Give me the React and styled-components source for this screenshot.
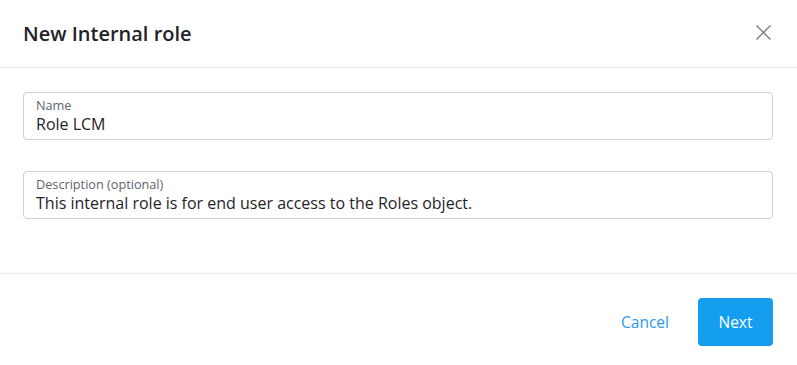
import React from "react";
import styled, { createGlobalStyle } from "styled-components";

const GlobalStyle = createGlobalStyle`
  html, body {
    margin: 0;
    padding: 0;
    background: #ffffff;
  }
  body {
    font-family: "Open Sans", "Liberation Sans", sans-serif;
    color: #1f2329;
  }
`;

export default function App() {
  return (
    <>
      <GlobalStyle />
      <Dialog>
        <Header>
          <Title>New Internal role</Title>
          <CloseButton aria-label="Close">
            <svg width="15" height="15" viewBox="0 0 15 15">
              <path
                d="M0.5 0.5 L14.5 14.5 M14.5 0.5 L0.5 14.5"
                stroke="#7b7f85"
                strokeWidth="1.4"
                fill="none"
              />
            </svg>
          </CloseButton>
        </Header>
        <Body>
          <Field>
            <Label>Name</Label>
            <Value>Role LCM</Value>
          </Field>
          <Field>
            <Label>Description (optional)</Label>
            <Value>This internal role is for end user access to the Roles object.</Value>
          </Field>
        </Body>
        <Footer>
          <LinkButton>Cancel</LinkButton>
          <PrimaryButton>Next</PrimaryButton>
        </Footer>
      </Dialog>
    </>
  );
}

const Dialog = styled.div`
  width: 797px;
  height: 365px;
  display: flex;
  flex-direction: column;
  background: #fff;
`;

const Header = styled.header`
  height: 68px;
  display: flex;
  align-items: center;
  justify-content: space-between;
  padding: 0 26px 0 23px;
  border-bottom: 1px solid #e8eaed;
  box-sizing: border-box;
`;

const Title = styled.h1`
  margin: 0;
  font-size: 20px;
  font-weight: 600;
  color: #1f2329;
  line-height: 1;
`;

const CloseButton = styled.button`
  border: 0;
  background: none;
  padding: 0;
  display: flex;
  cursor: pointer;
  margin-top: -3px;
`;

const Body = styled.div`
  display: flex;
  flex-direction: column;
  gap: 31px;
  padding: 24px 24px 0 23px;
  height: 206px;
  box-sizing: border-box;
  border-bottom: 1px solid #e8eaed;
`;

const Field = styled.div`
  height: 48px;
  box-sizing: border-box;
  border: 1px solid #c9d0da;
  border-radius: 4px;
  padding: 4px 12px 0;
  display: flex;
  flex-direction: column;
`;

const Label = styled.span`
  font-size: 12.7px;
  line-height: 17px;
  color: #5d6570;
`;

const Value = styled.span`
  font-size: 16px;
  line-height: 20px;
  color: #1f2329;
`;

const Footer = styled.footer`
  display: flex;
  justify-content: flex-end;
  align-items: flex-start;
  gap: 29px;
  padding: 24px 24px 0 23px;
`;

const LinkButton = styled.button`
  border: 0;
  background: none;
  font-family: inherit;
  font-size: 15.5px;
  color: #2a9aea;
  height: 48px;
  padding: 0;
  cursor: pointer;
`;

const PrimaryButton = styled.button`
  width: 75px;
  height: 48px;
  border: 0;
  border-radius: 4px;
  background: #139ef0;
  color: #fff;
  font-family: inherit;
  font-size: 15.5px;
  cursor: pointer;
`;
